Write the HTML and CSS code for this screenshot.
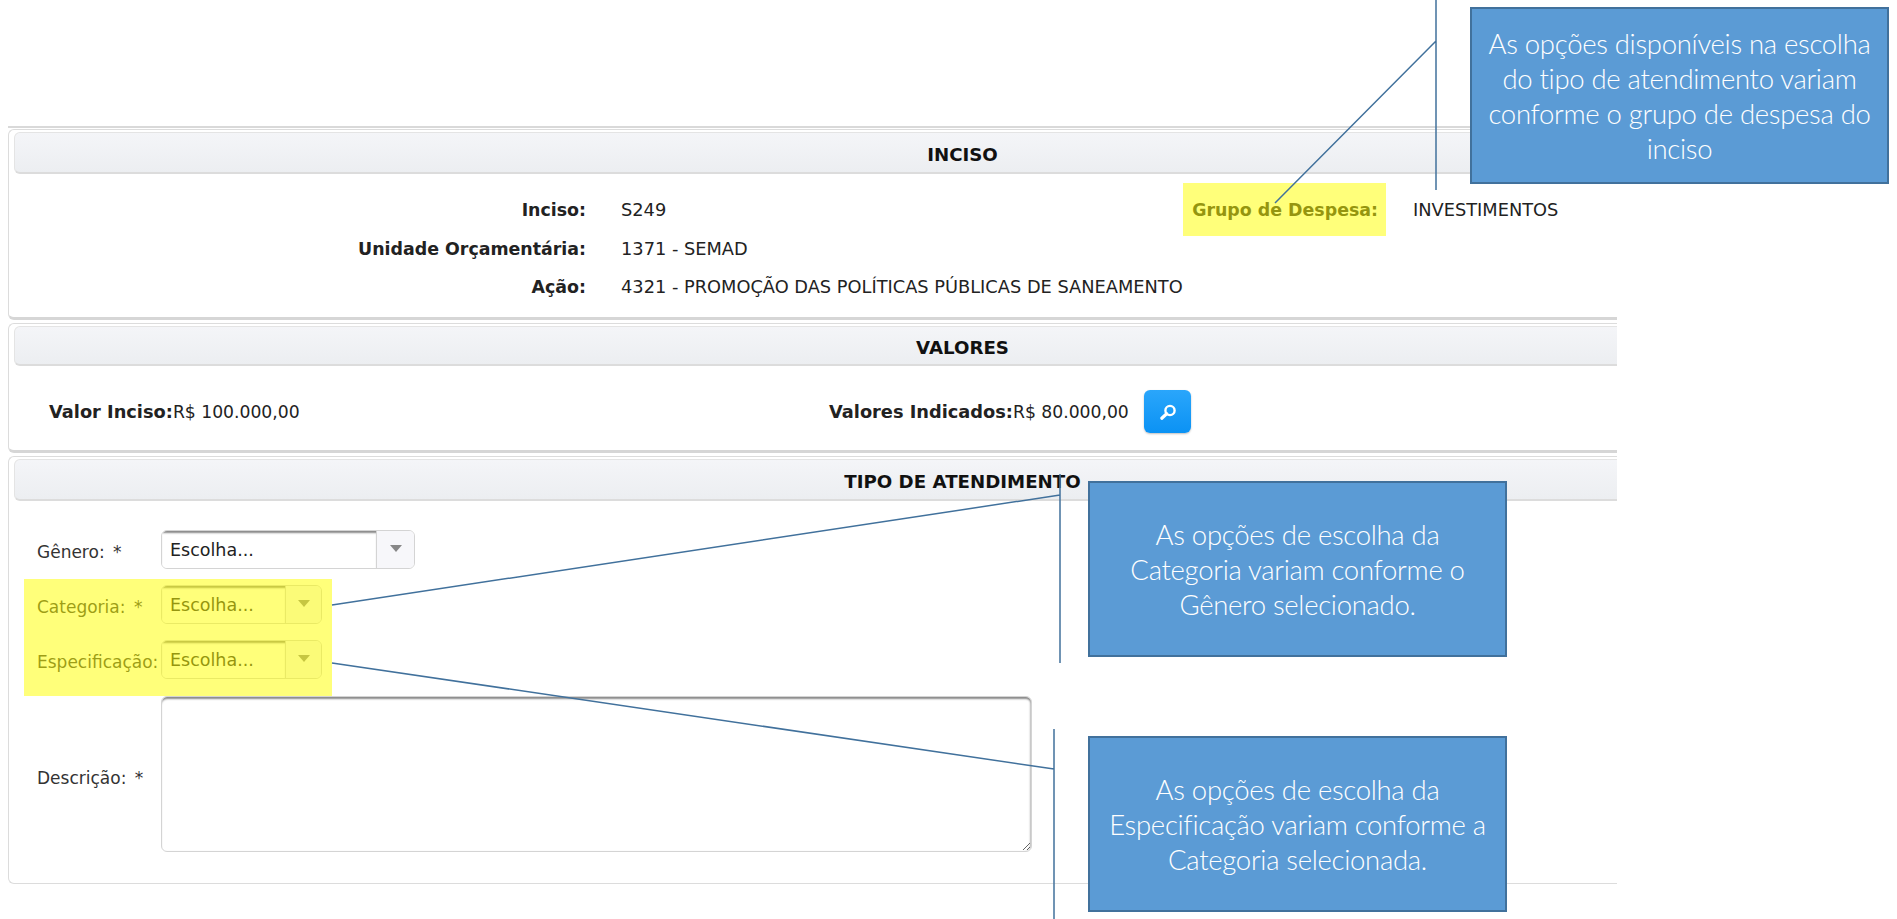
FILE: index.html
```html
<!DOCTYPE html>
<html lang="pt-BR">
<head>
    <meta charset="UTF-8">
    <meta name="viewport" content="width=device-width, initial-scale=1.0">
    <title>Tipo de Atendimento</title>
    <link rel="stylesheet" href="styles.css">
</head>
<body>
    <div class="page">
        <div class="panel-stub"></div>

        <section class="panel panel-inciso">
            <h2 class="panel-title">INCISO</h2>
            <div class="inciso-grid">
                <span class="lbl">Inciso:</span>
                <span>S249</span>
                <span class="lbl">Grupo de Despesa:</span>
                <span>INVESTIMENTOS</span>
                <span class="lbl">Unidade Orçamentária:</span>
                <span class="wide">1371 - SEMAD</span>
                <span class="lbl">Ação:</span>
                <span class="wide">4321 - PROMOÇÃO DAS POLÍTICAS PÚBLICAS DE SANEAMENTO</span>
            </div>
        </section>

        <section class="panel panel-valores">
            <h2 class="panel-title title-short">VALORES</h2>
            <div class="valores-row">
                <div class="valor-a"><b>Valor Inciso:</b>R$ 100.000,00</div>
                <div class="valor-b"><b>Valores Indicados:</b>R$ 80.000,00</div>
                <button class="btn-search" type="button" aria-label="Pesquisar">
                    <svg width="20" height="20" viewBox="0 0 20 20" fill="none" stroke="#fff">
                        <circle cx="12" cy="8.5" r="4.6" stroke-width="2.4"/>
                        <path d="M8.7 11.8 L3.8 16.2" stroke-width="3.2" stroke-linecap="round"/>
                    </svg>
                </button>
            </div>
        </section>

        <section class="panel panel-tipo">
            <h2 class="panel-title">TIPO DE ATENDIMENTO</h2>
            <form class="tipo-form">
                <label>Gênero: <i>*</i></label>
                <div class="combo combo-lg">
                    <span class="combo-text">Escolha...</span>
                    <span class="combo-arrow"></span>
                </div>
                <label>Categoria: <i>*</i></label>
                <div class="combo">
                    <span class="combo-text">Escolha...</span>
                    <span class="combo-arrow"></span>
                </div>
                <label>Especificação:</label>
                <div class="combo">
                    <span class="combo-text">Escolha...</span>
                    <span class="combo-arrow"></span>
                </div>
                <label class="label-desc">Descrição: <i>*</i></label>
                <textarea class="desc"></textarea>
            </form>
        </section>
    </div>

    <!-- annotations on top of the screen -->
    <div class="mark mark-grupo"></div>
    <div class="mark mark-combos"></div>

    <svg class="lines" width="1897" height="919" viewBox="0 0 1897 919">
        <path d="M1436 0 V190 M1436 41 L1275 203"/>
        <path d="M1060 474 V663 M1060 495 L332 605"/>
        <path d="M1054 729 V919 M1054 769 L332 663"/>
    </svg>

    <div class="callout callout-1">As opções disponíveis na escolha do tipo de atendimento variam conforme o grupo de despesa do inciso</div>
    <div class="callout callout-2">As opções de escolha da Categoria variam conforme o Gênero selecionado.</div>
    <div class="callout callout-3">As opções de escolha da Especificação variam conforme a Categoria selecionada.</div>
</body>
</html>
```

FILE: styles.css
```css
html, body {
    margin: 0;
    height: 919px;
    overflow: hidden;
    background-color: #fff;
}
body {
    font-family: "DejaVu Sans", sans-serif;
    font-size: 17.8px;
    color: #222;
}
.page {
    width: 1609px;
    padding: 126px 0 0 8px;
    overflow: hidden;
}
.panel-stub {
    height: 0;
    border-bottom: 2px solid #d9d9d9;
    margin-bottom: 1px;
}
.panel {
    width: 1903px;
    border: 1px solid #dcdcdc;
    border-right: none;
    border-radius: 6px 0 0 6px;
    padding: 2px 0 0 5px;
    margin-bottom: 3px;
    box-sizing: border-box;
}
.panel-inciso {
    height: 191px;
    border-bottom: 3px solid #d6d6d6;
}
.panel-valores {
    height: 130px;
    border-bottom: 3px solid #d6d6d6;
}
.panel-tipo {
    height: 428px;
}
.panel-title {
    margin: 0;
    height: 42px;
    box-sizing: border-box;
    padding-top: 3px;
    line-height: 37px;
    font-size: 18.2px;
    font-weight: bold;
    text-align: center;
    color: #111;
    background: linear-gradient(#f4f5f8, #eceef1);
    border: 1px solid #e4e4e4;
    border-bottom: 2px solid #dcdcdc;
    border-radius: 6px 0 0 6px;
}
.title-short {
    height: 40px;
    line-height: 35px;
}
.inciso-grid {
    display: grid;
    grid-template-columns: 572px 444px 278px 1fr;
    column-gap: 35px;
    padding-top: 17px;
    line-height: 38.5px;
}
.lbl {
    font-size: 17.4px;
    font-weight: bold;
    text-align: right;
}
.wide {
    grid-column: 2 / 5;
}
.valores-row {
    display: flex;
    align-items: center;
    padding: 24px 0 0 35px;
    font-size: 17.2px;
}
.valores-row b {
    font-size: 17.8px;
}
.valor-a {
    width: 780px;
}
.valor-b {
    width: 315px;
}
.btn-search {
    width: 47px;
    height: 43px;
    padding: 0;
    display: flex;
    align-items: center;
    justify-content: center;
    border: none;
    border-radius: 6px;
    background: linear-gradient(#2aa6fb, #0b92f4);
    box-shadow: 0 1px 2px rgba(0, 0, 0, 0.25);
}
.tipo-form {
    display: grid;
    grid-template-columns: 124px auto;
    justify-content: start;
    align-items: center;
    row-gap: 16px;
    padding: 29px 0 0 23px;
    font-size: 17px;
    color: #333;
}
.tipo-form label {
    padding-top: 4px;
}
.tipo-form label i {
    font-style: normal;
    margin-left: 3px;
}
.tipo-form .label-desc {
    padding-top: 8px;
}
.combo {
    width: 161px;
    height: 39px;
    box-sizing: border-box;
    display: flex;
    border: 1px solid #d4d4d4;
    border-radius: 6px;
    overflow: hidden;
    font-size: 17.5px;
    color: #222;
}
.combo-text {
    flex: 1;
    padding-left: 8px;
    line-height: 38px;
    box-shadow: inset 0 3px 2px -1px #8a8a8a;
    background-color: #fff;
    border-right: 1px solid #d4d4d4;
}
.combo-arrow {
    width: 35px;
    background-color: #f7f7fa;
    display: flex;
    align-items: center;
    justify-content: center;
}
.combo-arrow::after {
    content: "";
    margin-bottom: 3px;
    border-left: 6px solid transparent;
    border-right: 6px solid transparent;
    border-top: 7px solid #888;
}
.combo-lg {
    width: 254px;
}
.combo-lg .combo-arrow {
    width: 37px;
}
.desc {
    display: block;
    width: 871px;
    height: 156px;
    margin-top: 1px;
    box-sizing: border-box;
    border: 1px solid #d4d4d4;
    border-radius: 6px;
    box-shadow: inset 0 3px 2px -1px #8a8a8a, inset -2px 0 2px -1px #bbb;
    resize: both;
    outline: none;
}

/* annotations */
.mark {
    position: absolute;
    background-color: rgba(255, 255, 0, 0.52);
}
.mark-grupo {
    left: 1183px;
    top: 183px;
    width: 203px;
    height: 53px;
}
.mark-combos {
    left: 24px;
    top: 579px;
    width: 308px;
    height: 117px;
}
.lines {
    position: absolute;
    left: 0;
    top: 0;
}
.lines path {
    fill: none;
    stroke: #41719c;
    stroke-width: 1.5;
}
.callout {
    position: absolute;
    box-sizing: border-box;
    display: flex;
    align-items: center;
    text-align: center;
    padding: 0 6px;
    background-color: #5b9bd5;
    border: 2px solid #41719c;
    color: #fff;
    font-family: Lato, sans-serif;
    font-weight: 300;
    font-size: 27.5px;
    line-height: 35px;
    letter-spacing: -0.3px;
}
.callout-1 {
    left: 1470px;
    top: 7px;
    width: 419px;
    height: 177px;
}
.callout-2 {
    left: 1088px;
    top: 481px;
    width: 419px;
    height: 176px;
    padding: 0 24px;
}
.callout-3 {
    left: 1088px;
    top: 736px;
    width: 419px;
    height: 176px;
}
```
